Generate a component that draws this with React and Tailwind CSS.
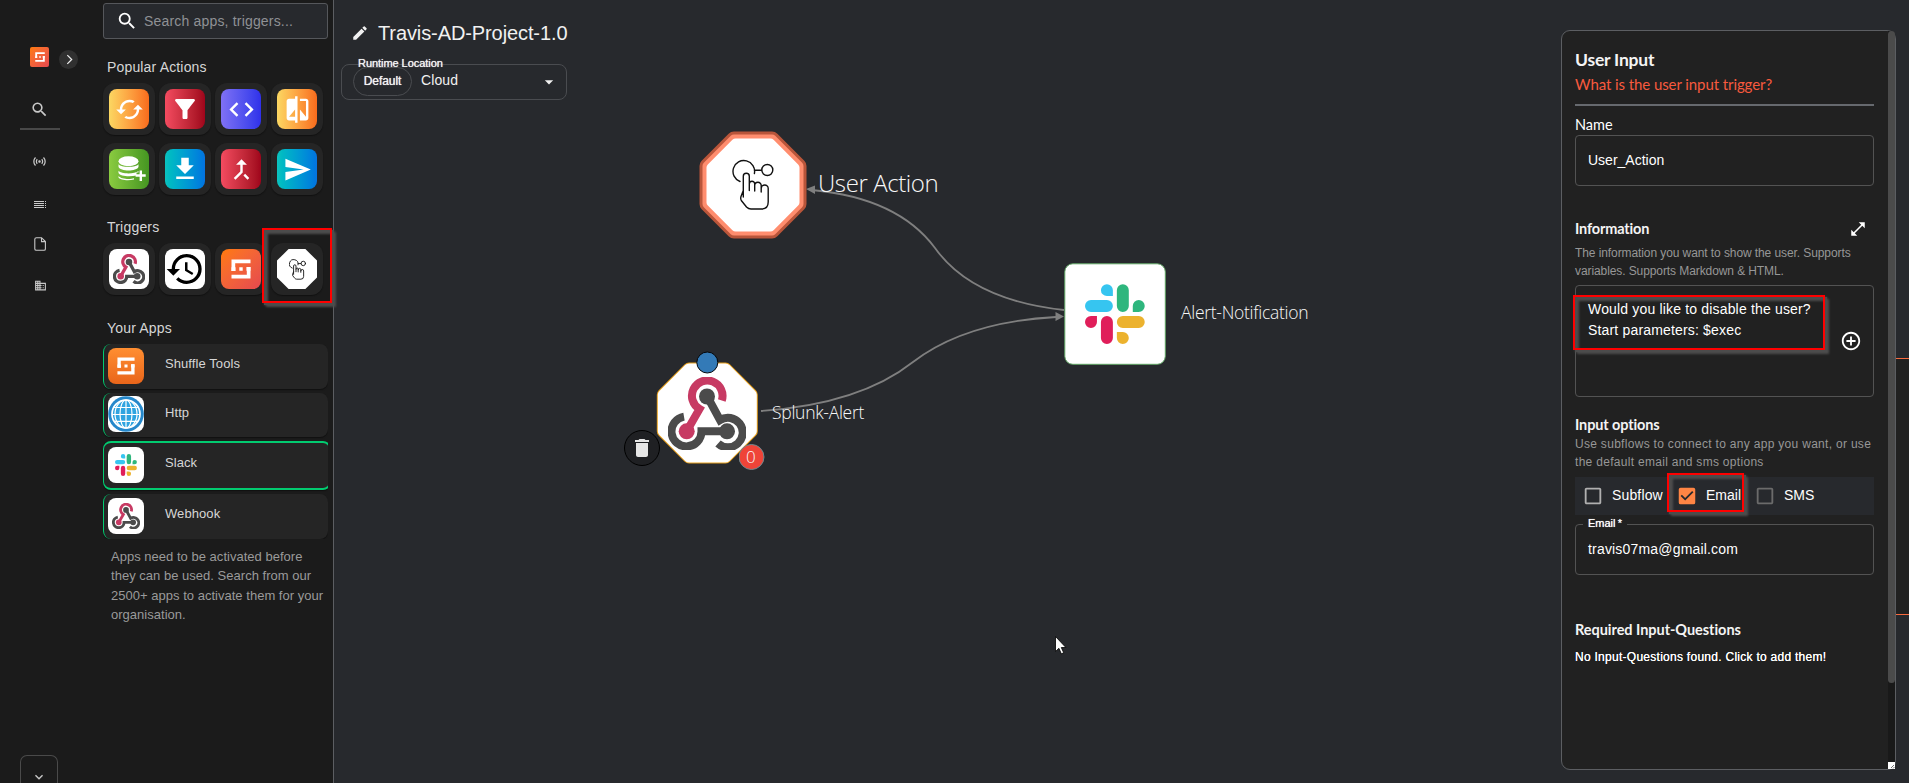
import React from "react";
import {
  MdSearch, MdCached, MdFilterAlt, MdCode, MdCompare, MdFileDownload, MdCallMerge, MdSend,
  MdHistory, MdBusiness, MdEdit, MdArrowDropDown, MdDelete, MdOpenInFull, MdAddCircleOutline,
  MdCheckBoxOutlineBlank, MdCheckBox, MdSensors, MdKeyboardArrowDown,
} from "react-icons/md";

const Webhook = ({ className }) => (
  <svg viewBox="0 0 78 73" className={className} fill="none" strokeWidth="8">
    <path d="M16 39.600A15 15 0 1 0 33.500 54.300H59" stroke="#4b4b4b" />
    <path d="M39 19L52 43A14.800 14.800 0 1 1 50 66.500" stroke="#4b4b4b" />
    <path d="M53.800 23.500A15.300 15.300 0 1 0 31.500 32L18.700 54.300" stroke="#c73a63" />
    <circle cx="39" cy="19.500" r="8" fill="#4b4b4b" />
    <circle cx="18.700" cy="54.300" r="8" fill="#c73a63" />
    <circle cx="59" cy="54.300" r="8" fill="#4b4b4b" />
  </svg>
);

const SlackLogo = ({ className }) => (
  <svg viewBox="0 0 54 54" className={className}>
    <path fill="#36C5F0" d="M19.712.133a5.381 5.381 0 0 0-5.376 5.387 5.381 5.381 0 0 0 5.376 5.386h5.376V5.52A5.381 5.381 0 0 0 19.712.133m0 14.365H5.376A5.381 5.381 0 0 0 0 19.884a5.381 5.381 0 0 0 5.376 5.387h14.336a5.381 5.381 0 0 0 5.376-5.387 5.381 5.381 0 0 0-5.376-5.386" />
    <path fill="#2EB67D" d="M53.76 19.884a5.381 5.381 0 0 0-5.376-5.386 5.381 5.381 0 0 0-5.376 5.386v5.387h5.376a5.381 5.381 0 0 0 5.376-5.387m-14.336 0V5.52A5.381 5.381 0 0 0 34.048.133a5.381 5.381 0 0 0-5.376 5.387v14.364a5.381 5.381 0 0 0 5.376 5.387 5.381 5.381 0 0 0 5.376-5.387" />
    <path fill="#ECB22E" d="M34.048 54a5.381 5.381 0 0 0 5.376-5.387 5.381 5.381 0 0 0-5.376-5.386h-5.376v5.386A5.381 5.381 0 0 0 34.048 54m0-14.365h14.336a5.381 5.381 0 0 0 5.376-5.386 5.381 5.381 0 0 0-5.376-5.387H34.048a5.381 5.381 0 0 0-5.376 5.387 5.381 5.381 0 0 0 5.376 5.386" />
    <path fill="#E01E5A" d="M0 34.249a5.381 5.381 0 0 0 5.376 5.386 5.381 5.381 0 0 0 5.376-5.386v-5.387H5.376A5.381 5.381 0 0 0 0 34.25m14.336-.001v14.364A5.381 5.381 0 0 0 19.712 54a5.381 5.381 0 0 0 5.376-5.387V34.25a5.381 5.381 0 0 0-5.376-5.387 5.381 5.381 0 0 0-5.376 5.386" />
  </svg>
);

const ShuffleMark = ({ className }) => (
  <svg viewBox="0 0 20 20" className={className} fill="#fff">
    <path d="M0.500 0.500H19.500V4.200H4.200V12H0.500ZM19.500 19.500H0.500V15.800H15.800V8H19.500ZM8.300 8.300h3.400v3.400H8.300Z" />
    <path d="M0.500 8.300H4.500V12H0.500ZM15.500 8H19.500V11.700H15.500Z" />
  </svg>
);

const Tap = ({ className, sw = 1.4 }) => (
  <svg viewBox="0 0 42 52" className={className} fill="none" stroke="#111" strokeWidth={sw} strokeLinecap="round" strokeLinejoin="round">
    <path d="M8 22.500A10.800 10.800 0 1 1 22.400 14.500" />
    <path d="M22.500 11.300H29.500" />
    <circle cx="35.300" cy="11" r="5.500" />
    <path d="M11.300 38V17.300A3 3 0 0 1 17.300 17.300V31.500M17.300 25A2.700 2.700 0 0 1 22.700 25V32M22.700 26.500A3.200 3.200 0 0 1 29.200 26.500V33M29.200 29.500A3.500 3.500 0 0 1 36.200 29.500V43Q36.200 50 29.500 50H19Q16.500 50 14.500 48L9.300 41.500Q8.300 39.800 9 37.500L11.300 31.500" />
  </svg>
);

const DatabasePlus = ({ className }) => (
  <svg viewBox="0 0 28 26" className={className} fill="#fff">
    <ellipse cx="10.500" cy="5.300" rx="10" ry="5" />
    <path d="M.5 8.300C3 11.800 18 11.800 20.500 8.300V10.800C19 15.800 2 15.800.5 10.800ZM.5 14.800C3 18.300 17 18.300 20.500 15V16.500H18.500V19.500C12 21 2 20.500.5 17Z" />
    <path d="M.5 20C3 23.300 12 23.500 16 22.300V23.500C10 25 2 24 .5 21.500Z" />
    <path d="M21.600 14.500h2.400v3.800h3.700v2.400H24v4.300h-2.400v-4.300h-4v-2.400h4Z" />
  </svg>
);

const Globe = ({ className }) => (
  <svg viewBox="0 0 36 36" className={className} fill="none">
    <circle cx="18" cy="18" r="17.800" fill="#2588cb" />
    <circle cx="18" cy="18" r="14" fill="#2fa4e0" stroke="#fff" strokeWidth="1.700" />
    <g stroke="#fff" strokeWidth="1.200">
      <ellipse cx="18" cy="18" rx="6" ry="14" />
      <ellipse cx="18" cy="18" rx="11" ry="14" />
      <path d="M18 4V32M4 18.500H32M6 11.500H30M6 25.300H30" />
    </g>
  </svg>
);

const Tile = ({ children }) => (
  <div className="flex h-[52px] w-[52px] items-center justify-center rounded-[12px] bg-[#252525] shadow-[0_1px_1px_#111]">
    {children}
  </div>
);

const marker =
  "absolute z-10 border-2 border-[#f00] [filter:drop-shadow(2px_2px_0.5px_#4c4c4c)_drop-shadow(2px_2px_1px_#4c4c4c)]";

const orange = "from-[#fbd762] to-[#f76b1c]";
const red = "from-[#f44b60] to-[#9f041b]";
const blue = "from-[#0dc3be] to-[#0673e0]";
const actions = [
  [orange, <MdCached className="size-[29px]" />],
  [red, <MdFilterAlt className="size-[30px]" />],
  ["from-[#8070f4] to-[#3030ea]", <MdCode className="size-[29px]" />],
  [orange, <MdCompare className="size-[29px]" />],
  ["from-[#8acb40] to-[#459622]", <DatabasePlus className="ml-[5px] h-[26px] w-[28px]" />],
  [blue, <MdFileDownload className="size-[30px]" />],
  [red, <MdCallMerge className="size-[29px]" />],
  [blue, <MdSend className="size-[29px]" />],
];

const white = "flex size-9 items-center justify-center rounded-[8px] bg-white";
const apps = [
  ["Shuffle Tools", "h-[45px]", <div className="flex size-9 items-center justify-center rounded-[8px] bg-linear-to-b from-[#ff8e31] to-[#e9651a]"><ShuffleMark className="size-[18px]" /></div>],
  ["Http", "h-[44px]", <div className={white}><Globe className="size-9" /></div>],
  ["Slack", "h-[49px]", <div className={white}><SlackLogo className="size-[22px]" /></div>],
  ["Webhook", "h-[45px]", <div className={white}><Webhook className="h-[26px] w-7" /></div>],
];

const Rail = () => (
  <nav className="relative flex h-full w-[79px] shrink-0 flex-col items-center text-[#c9c9c9]">
    <div className="mt-[47px] flex h-5 w-[19px] items-center justify-center rounded-[2px] bg-linear-to-br from-[#ff7a00] to-[#e5484d]">
      <ShuffleMark className="size-[10px]" />
    </div>
    <div className="absolute top-[50px] left-[59px] flex size-[19px] items-center justify-center rounded-full bg-[#303030]">
      <svg viewBox="0 0 8 12" className="ml-px h-[11px] w-[7px]" fill="none" stroke="#eee" strokeWidth="1.400"><path d="M1.500 1L6.500 6L1.500 11" /></svg>
    </div>
    <MdSearch className="mt-[33px] -ml-px size-[19px]" />
    <div className="mt-[9px] h-[2px] w-10 bg-[#494949]" />
    <MdSensors className="mt-[24px] size-[15px]" />
    <svg viewBox="0 0 12 7" className="mt-[32px] h-[7px] w-3" fill="#c9c9c9" shapeRendering="crispEdges">
      <path d="M0 0h10v1H0zM0 2h10v1H0zM0 4h10v1H0zM0 6h10v1H0zM11 0h1v1h-1zM11 2h1v1h-1zM11 4h1v1h-1zM11 6h1v1h-1z" />
    </svg>
    <svg viewBox="0 0 12 14" className="mt-[29px] h-[14px] w-3" fill="none" stroke="#c9c9c9" strokeWidth="1.100">
      <path d="M2.500.7H7.500L11.400 4.600V12Q11.400 13.300 10 13.300H2.500Q.8 13.300.8 12V2.200Q.8.7 2.500.7ZM7.500.7V4.600H11.400" />
    </svg>
    <MdBusiness className="mt-[28px] ml-[2px] size-[13px]" />
    <div className="mt-auto mr-[1px] flex h-[28px] w-[38px] items-start justify-center rounded-t-[7px] border border-b-0 border-[#4a4a4a] pt-[13px]">
      <MdKeyboardArrowDown className="size-4" />
    </div>
  </nav>
);

const Sidebar = () => (
  <aside className="flex h-full w-[254px] shrink-0 flex-col pt-[3px] pl-6 text-[#d6d6d6]">
    <div className="flex h-9 w-[225px] items-center rounded-[3px] border border-[#55575b] bg-[#27292d] pl-[12px]">
      <MdSearch className="size-[22px] text-white" />
      <span className="ml-[6px] text-[14px] tracking-[0.180px] text-[#8f9195]">Search apps, triggers...</span>
    </div>
    <h2 className="mt-[18px] ml-[4px] text-[14px] leading-5 tracking-[0.160px]">Popular Actions</h2>
    <div className="mt-[6px] grid w-[220px] grid-cols-[repeat(4,52px)] gap-x-1 gap-y-2">
      {actions.map(([grad, icon], i) => (
        <Tile key={i}>
          <div className={`flex size-10 items-center justify-center rounded-[8px] bg-linear-to-r text-white ${grad}`}>{icon}</div>
        </Tile>
      ))}
    </div>
    <h2 className="mt-[22px] ml-[4px] text-[14px] leading-5 tracking-[0.200px]">Triggers</h2>
    <div className="relative mt-[6px] grid w-[220px] grid-cols-[repeat(4,52px)] gap-x-1">
      <Tile><div className="flex size-10 items-center justify-center rounded-[8px] bg-white"><Webhook className="h-[30px] w-8" /></div></Tile>
      <Tile><div className="flex size-10 items-center justify-center rounded-[8px] bg-white"><MdHistory className="size-10 shrink-0 text-black" /></div></Tile>
      <Tile><div className="flex size-10 items-center justify-center rounded-[8px] bg-linear-to-br from-[#ff7a00] to-[#e5484d]"><ShuffleMark className="size-5" /></div></Tile>
      <Tile>
        <div className="flex size-10 items-center justify-center bg-white [clip-path:polygon(29%_0,71%_0,100%_29%,100%_71%,71%_100%,29%_100%,0_71%,0_29%)]">
          <Tap className="h-[21px] w-[17px]" sw={2.2} />
        </div>
      </Tile>
      <div className={`${marker} -top-[15px] left-[159px] h-[75px] w-[70px]`} />
    </div>
    <h2 className="mt-[23px] ml-[4px] text-[14px] leading-5 tracking-[0.180px]">Your Apps</h2>
    <ul className="mt-[6px] flex w-[225px] flex-col gap-1 overflow-hidden">
      {apps.map(([name, h, icon]) => (
        <li
          key={name}
          className={`flex items-center rounded-[8px] bg-[#252525] pb-[2px] shadow-[0_1px_1px_#111] ${h} ${
            name === "Slack" ? "w-[228px] border-2 border-l border-[#02cb70] pl-1" : "border-l border-[#02cb70] pl-1"
          }`}
        >
          {icon}
          <span className="-mt-[3px] ml-[21px] text-[13px] tracking-[0.080px]">{name}</span>
        </li>
      ))}
    </ul>
    <p className="mt-[8px] ml-[8px] w-[222px] text-[13px] leading-[19.400px] tracking-[0.020px] text-[#9a9a9a]">
      Apps need to be activated before<br />they can be used. Search from our<br />2500+ apps to activate them for your<br />organisation.
    </p>
  </aside>
);

const octagon = (cx, cy, r) => {
  const k = r * 0.4142;
  return [[-k, -r], [k, -r], [r, -k], [r, k], [k, r], [-k, r], [-r, k], [-r, -k]]
    .map(([x, y]) => `${cx + x},${cy + y}`).join(" ");
};

const Canvas = () => (
  <main className="relative h-full flex-1 border-l border-[#5c5e62]">
    <svg viewBox="334 0 1575 783" className="absolute inset-0 h-[783px] w-[1575px]" fill="none">
      <g stroke="#7f7f7f" strokeWidth="1.800">
        <path d="M1064 310Q972 300 935 248Q898 198 812 190" />
        <path d="M761 411Q860 404 913 362Q965 322 1056 317" />
      </g>
      <path d="M806 189L815 185.500V194ZM1064 316.500L1055.500 312V321Z" fill="#7f7f7f" />
      <g strokeLinejoin="round">
        <polygon points={octagon(753, 185, 46)} stroke="#b9553a" strokeWidth="15" />
        <polygon points={octagon(753, 185, 46)} fill="#fff" stroke="#ff8d6e" strokeWidth="9" />
        <polygon points={octagon(753, 185, 42)} fill="#fff" stroke="#fff" strokeWidth="9" />
        <polygon points={octagon(707.3, 413, 44)} fill="#fff" stroke="#e8a01c" strokeWidth="13" />
        <polygon points={octagon(707.3, 413, 44)} fill="#fff" stroke="#fff" strokeWidth="11" />
      </g>
      <circle cx="707.300" cy="362.500" r="10.500" fill="#337ab7" stroke="#05070a" />
      <circle cx="642" cy="448" r="17.500" fill="#1f2023" stroke="#000" />
      <rect x="1064.800" y="263.800" width="100.500" height="100.500" rx="8" fill="#fff" stroke="#5fa463" />
      <path d="M1055.500 636.500V651.500L1058.900 648.300L1061.300 653.800L1063.700 652.800L1061.300 647.500H1065.900Z" fill="#fff" stroke="#000" strokeWidth=".8" />
    </svg>

    <div className="relative flex items-center pt-[20px] pl-[17px] text-[#f1f1f1]">
      <MdEdit className="size-[18px]" />
      <h1 className="ml-[9px] text-[20px] leading-[26px] tracking-[-0.100px]">Travis-AD-Project-1.0</h1>
    </div>
    <div className="relative mt-[18px] ml-[7px] flex h-9 w-[226px] items-center rounded-[8px] border border-[#4a4c50] pl-[11px] text-[#f1f1f1]">
      <span className="absolute -top-[9px] left-[16px] text-[11px] leading-[14px] tracking-[-0.050px] whitespace-nowrap [text-shadow:0_0_0.700px_#fff]">Runtime Location</span>
      <span className="mt-[-1px] flex h-[29px] w-[59px] items-center justify-center rounded-full border border-[#4a4c50] pb-[2px] text-[12px] tracking-[-0.050px] [text-shadow:0_0_0.700px_#fff]">Default</span>
      <span className="-mt-[4px] ml-[9px] text-[14px] tracking-[0.100px]">Cloud</span>
      <MdArrowDropDown className="mr-[7px] ml-auto size-[20px]" />
    </div>

    <Tap className="absolute top-[159px] left-[398px] h-[52px] w-[42px]" />
    <Webhook className="absolute top-[377px] left-[334px] h-[73px] w-[78px]" />
    <svg viewBox="0 0 26 26" className="absolute top-[444px] left-[405px] size-[26px]"><circle cx="12.500" cy="13" r="12.500" fill="#ef4438" stroke="#6d8a91" /></svg>
    <MdDelete className="absolute top-[436px] left-[296px] size-[24px] text-[#e6e6e6]" />
    <SlackLogo className="absolute top-[284px] left-[751px] size-[60px]" />
    <div className="font-['Open_Sans',sans-serif] font-light text-[#f8f8f8]">
      <span className="absolute top-[167px] left-[484px] text-[24px] leading-[32px] tracking-[-0.400px] whitespace-nowrap">User Action</span>
      <span className="absolute top-[400px] left-[438px] text-[17.500px] leading-[24px] tracking-[-0.280px] whitespace-nowrap">Splunk-Alert</span>
      <span className="absolute top-[300px] left-[847px] text-[17.500px] leading-[24px] tracking-[-0.280px] whitespace-nowrap">Alert-Notification</span>
      <span className="absolute top-[445px] left-[412px] text-[17px] leading-[24px]">0</span>
    </div>

    <div className="absolute top-[358px] right-0 h-[257px] w-[14px] border-y border-[#f86a3e] bg-[#212121]" />
    <Panel />
  </main>
);

const heading = "font-['Lato',sans-serif] font-bold text-[#f4f4f4]";
const field = "rounded-[4px] border border-[#535353] px-3 text-[14px] text-white";

const Panel = () => (
  <section className="absolute top-[30px] right-[13px] flex h-[740px] w-[335px] rounded-[9px] border border-[#5c5e62] bg-[#212121]">
    <div className="flex w-[326px] flex-col pt-[17px] pl-[13px]">
      <h2 className={`${heading} text-[17.500px] leading-6 tracking-[-0.200px]`}>User Input</h2>
      <a className="mt-[2px] font-['Lato',sans-serif] text-[15px] leading-5 tracking-[-0.080px] text-[#f85a3e]">What is the user input trigger?</a>
      <div className="mt-[10px] h-[2px] w-[299px] bg-[#66696e]" />
      <label className="mt-[9px] font-['Lato',sans-serif] text-[14.500px] leading-5 text-white">Name</label>
      <div className={`${field} flex h-[51px] w-[299px] items-center`}>User_Action</div>
      <div className="mt-[33px] flex w-[299px] items-center justify-between">
        <h3 className={`${heading} text-[14.500px] leading-5 tracking-[-0.150px]`}>Information</h3>
        <MdOpenInFull className="mr-[7px] size-[18px] text-white" />
      </div>
      <p className="mt-[5px] text-[12px] leading-[18px] tracking-[-0.090px] text-[#979797]">The information you want to show the user. Supports<br />variables. Supports Markdown &amp; HTML.</p>
      <div className={`${field} relative mt-[5px] h-[112px] w-[299px] pt-[13px] leading-[21px] tracking-[0.170px]`}>
        Would you like to disable the user?<br />Start parameters: $exec
        <MdAddCircleOutline className="absolute top-[44px] right-[11px] size-[22px]" />
        <div className={`${marker} top-[9px] -left-[3px] h-[55px] w-[252px]`} />
      </div>
      <h3 className={`${heading} mt-[18px] text-[14.500px] leading-5 tracking-[-0.120px]`}>Input options</h3>
      <p className="text-[12px] leading-[18px] tracking-[0.300px] text-[#979797]">Use subflows to connect to any app you want, or use<br />the default email and sms options</p>
      <div className="relative mt-[6px] flex h-[38px] w-[299px] items-center bg-[#27292d] pb-px text-[14px] text-white">
        <MdCheckBoxOutlineBlank className="ml-[7px] size-[22px] text-[#b0b0b0]" />
        <span className="-mt-px ml-2 w-[64px] tracking-[0.150px]">Subflow</span>
        <MdCheckBox className="size-[22px] text-[#ff8544]" />
        <span className="-mt-px ml-[8px] w-[48px]">Email</span>
        <MdCheckBoxOutlineBlank className="size-[22px] text-[#6b6b6b]" />
        <span className="-mt-px ml-[8px]">SMS</span>
        <div className={`${marker} -top-[4px] left-[92px] h-[39px] w-[77px]`} />
      </div>
      <div className={`${field} relative mt-[9px] flex h-[51px] w-[299px] items-center tracking-[0.180px]`}>
        <span className="absolute -top-[9px] left-[7px] bg-[#212121] px-[5px] text-[11px] leading-[14px] tracking-normal [text-shadow:0_0_0.700px_#fff]">Email&thinsp;*</span>
        travis07ma@gmail.com
      </div>
      <h3 className={`${heading} mt-[45px] text-[14.500px] leading-5 tracking-[-0.040px]`}>Required Input-Questions</h3>
      <p className="mt-[7px] text-[12px] leading-5 tracking-[0.270px] text-white [text-shadow:0_0_0.500px_#fff]">No Input-Questions found. Click to add them!</p>
    </div>
    <div className="flex w-[7px] flex-col rounded-tr-[7px] bg-[#191919]">
      <div className="h-[652px] rounded-full bg-[#4b4b4b]" />
      <div className="mt-auto flex size-[7px] bg-white">
        <svg viewBox="0 0 7 7" className="size-[7px]" stroke="#777" fill="none"><path d="M3 6L6 3M5 6.500L6.500 5" /></svg>
      </div>
    </div>
  </section>
);

export default function App() {
  return (
    <div className="flex h-[783px] w-full overflow-hidden bg-[#27292d] font-['Liberation_Sans',Arial,sans-serif]">
      <div className="flex h-full w-[333px] shrink-0 bg-[#1b1b1b]">
        <Rail />
        <Sidebar />
      </div>
      <Canvas />
    </div>
  );
}
